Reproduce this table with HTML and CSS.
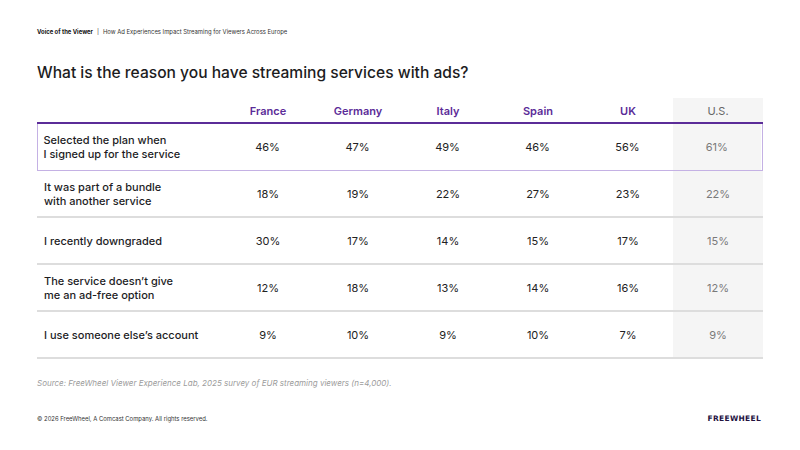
FILE: index.html
```html
<!DOCTYPE html>
<html>
<head>
<meta charset="utf-8">
<link rel="stylesheet" href="styles.css">
</head>
<body>
<div class="page">
  <div class="topline"><b>Voice of the Viewer</b><span class="sep">|</span>How Ad Experiences Impact Streaming for Viewers Across Europe</div>
  <h1 class="title">What is the reason you have streaming services with ads?</h1>
  <div class="table">
    <div class="row head">
      <div class="label"></div>
      <div class="cell">France</div>
      <div class="cell">Germany</div>
      <div class="cell">Italy</div>
      <div class="cell">Spain</div>
      <div class="cell">UK</div>
      <div class="cell us">U.S.</div>
    </div>
    <div class="row first">
      <div class="label">Selected the plan when<br>I signed up for the service</div>
      <div class="cell">46%</div><div class="cell">47%</div><div class="cell">49%</div><div class="cell">46%</div><div class="cell">56%</div><div class="cell us">61%</div>
    </div>
    <div class="row">
      <div class="label">It was part of a bundle<br>with another service</div>
      <div class="cell">18%</div><div class="cell">19%</div><div class="cell">22%</div><div class="cell">27%</div><div class="cell">23%</div><div class="cell us">22%</div>
    </div>
    <div class="row">
      <div class="label">I recently downgraded</div>
      <div class="cell">30%</div><div class="cell">17%</div><div class="cell">14%</div><div class="cell">15%</div><div class="cell">17%</div><div class="cell us">15%</div>
    </div>
    <div class="row">
      <div class="label">The service doesn’t give<br>me an ad-free option</div>
      <div class="cell">12%</div><div class="cell">18%</div><div class="cell">13%</div><div class="cell">14%</div><div class="cell">16%</div><div class="cell us">12%</div>
    </div>
    <div class="row">
      <div class="label">I use someone else’s account</div>
      <div class="cell">9%</div><div class="cell">10%</div><div class="cell">9%</div><div class="cell">10%</div><div class="cell">7%</div><div class="cell us">9%</div>
    </div>
  </div>
  <p class="source">Source: FreeWheel Viewer Experience Lab, 2025 survey of EUR streaming viewers (n=4,000).</p>
  <div class="footer">
    <span class="copy">© 2026 FreeWheel, A Comcast Company. All rights reserved.</span>
    <span class="logo">FREEWHEEL</span>
  </div>
</div>
</body>
</html>
```
FILE: styles.css
```css
* { box-sizing: border-box; }
html, body { margin: 0; padding: 0; background: #fff; }
body { font-family: Inter, "Noto Sans", sans-serif; color: #1d1d1f; }
.page { width: 800px; height: 450px; padding: 28px 37px 0 37px; display: flex; flex-direction: column; }
.topline { font-size: 5.9px; line-height: 8px; color: #333; }
.topline b { font-weight: 700; color: #111; }
.topline .sep { margin: 0 4px; color: #333; }
.title { margin: 27px 0 0 0; font-size: 15.6px; line-height: 20px; font-weight: 500; color: #1c1c1e; }
.table { margin-top: 15px; width: 726px; display: flex; flex-direction: column; }
.row { display: grid; grid-template-columns: 186px repeat(6, 90px); height: 47px; border-bottom: 2px solid #dddddd; }
.row.head { height: 26px; border-bottom: 2px solid #5b2c98; }
.row.first { border: 1.5px solid #c4b1e4; border-top: 0; grid-template-columns: 184.5px repeat(5, 90px) 88.5px; }
.label { display: flex; align-items: center; padding-left: 7px; font-size: 11px; line-height: 14px; font-weight: 500; color: #1d1d1f; }
.row.first .label { padding-left: 5.5px; }
.cell { display: flex; align-items: center; justify-content: center; font-size: 11px; color: #222; }
.head .cell { font-weight: 600; color: #5b2c98; font-size: 11px; padding-top: 1px; }
.cell.us { background: #f5f5f5; color: #7a7a7a; }
.head .cell.us { font-weight: 400; color: #666; }
.source { margin: 19px 0 0 0; font-size: 8px; font-style: italic; color: #9c9c9c; }
.footer { margin-top: 26px; display: flex; justify-content: space-between; align-items: center; }
.copy { font-size: 5.9px; color: #333; }
.logo { font-family: "DejaVu Sans", sans-serif; font-weight: 700; font-size: 7.5px; letter-spacing: 0.3px; color: #24133f; margin-right: 2px; }
```
